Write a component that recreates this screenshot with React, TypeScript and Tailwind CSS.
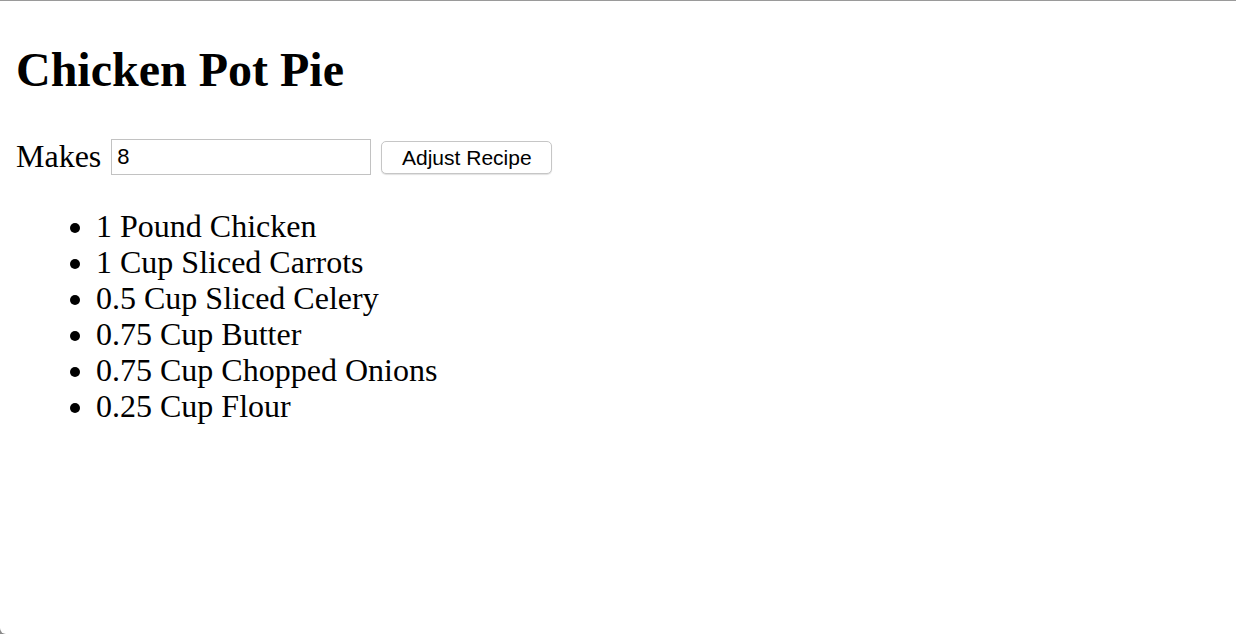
import React from "react";

export default function App() {
  const items = [
    "1 Pound Chicken",
    "1 Cup Sliced Carrots",
    "0.5 Cup Sliced Celery",
    "0.75 Cup Butter",
    "0.75 Cup Chopped Onions",
    "0.25 Cup Flour",
  ];
  return (
    <div className="h-[634px] w-[1236px] bg-[#8a8a8a] overflow-hidden">
      <div
        className="h-[634px] w-[1236px] bg-white border-t border-[#9a9a9a] rounded-bl-[6px] text-black px-4"
        style={{ fontFamily: '"Liberation Serif", "Times New Roman", serif' }}
      >
        <h1 className="mt-[42px] text-[48px] leading-[53px] font-bold">Chicken Pot Pie</h1>
        <div className="mt-[43px] flex items-center h-[36px]">
          <span className="text-[32px] leading-[36px] relative top-[-1px]">Makes</span>
          <input
            defaultValue="8"
            className="ml-[10px] w-[260px] h-[36px] border border-[#c2c2c2] px-[5px] text-[22px] outline-none"
            style={{ fontFamily: '"Liberation Sans", Arial, sans-serif' }}
          />
          <button
            className="ml-[10px] w-[171px] h-[33px] border border-[#c6c6c6] rounded-[5px] bg-white shadow-[0_1px_1px_rgba(0,0,0,0.12)] text-[21px] leading-none text-black"
            style={{ fontFamily: '"Liberation Sans", Arial, sans-serif' }}
          >
            Adjust Recipe
          </button>
        </div>
        <ul className="mt-[33px] pl-[80px] list-disc text-[32px] leading-[36px]">
          {items.map((it) => (
            <li key={it}>{it}</li>
          ))}
        </ul>
      </div>
    </div>
  );
}
